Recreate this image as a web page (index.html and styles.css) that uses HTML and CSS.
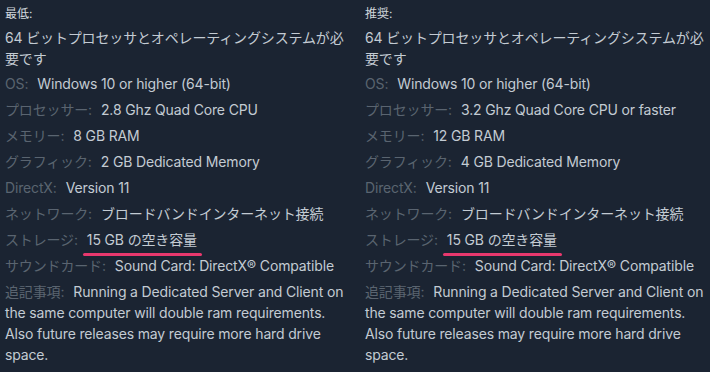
FILE: index.html
```html
<!DOCTYPE html>
<html lang="ja">
<head>
<meta charset="utf-8">
<link rel="stylesheet" href="styles.css">
</head>
<body>
<div class="sysreq">
  <div class="col">
    <div class="head">最低:</div>
    <ul class="list">
      <li>64 ビットプロセッサとオペレーティングシステムが必要です</li>
      <li><span class="lbl">OS:</span>Windows 10 or higher (64-bit)</li>
      <li><span class="lbl">プロセッサー:</span>2.8 Ghz Quad Core CPU</li>
      <li><span class="lbl">メモリー:</span>8 GB RAM</li>
      <li><span class="lbl">グラフィック:</span>2 GB Dedicated Memory</li>
      <li><span class="lbl">DirectX:</span>Version 11</li>
      <li><span class="lbl">ネットワーク:</span>ブロードバンドインターネット接続</li>
      <li><span class="lbl">ストレージ:</span><span class="mark">15 GB の空き容量</span></li>
      <li><span class="lbl">サウンドカード:</span>Sound Card: DirectX® Compatible</li>
      <li><span class="lbl">追記事項:</span>Running a Dedicated Server and Client on the same computer will double ram requirements. Also future releases may require more hard drive space.</li>
    </ul>
  </div>
  <div class="col">
    <div class="head">推奨:</div>
    <ul class="list">
      <li>64 ビットプロセッサとオペレーティングシステムが必要です</li>
      <li><span class="lbl">OS:</span>Windows 10 or higher (64-bit)</li>
      <li><span class="lbl">プロセッサー:</span>3.2 Ghz Quad Core CPU or faster</li>
      <li><span class="lbl">メモリー:</span>12 GB RAM</li>
      <li><span class="lbl">グラフィック:</span>4 GB Dedicated Memory</li>
      <li><span class="lbl">DirectX:</span>Version 11</li>
      <li><span class="lbl">ネットワーク:</span>ブロードバンドインターネット接続</li>
      <li><span class="lbl">ストレージ:</span><span class="mark">15 GB の空き容量</span></li>
      <li><span class="lbl">サウンドカード:</span>Sound Card: DirectX® Compatible</li>
      <li><span class="lbl">追記事項:</span>Running a Dedicated Server and Client on the same computer will double ram requirements. Also future releases may require more hard drive space.</li>
    </ul>
  </div>
</div>
</body>
</html>
```
FILE: styles.css
```css
html, body {
  margin: 0;
  padding: 0;
  background: #1b2432;
  width: 710px;
  height: 372px;
  overflow: hidden;
}
body {
  font-family: Inter, "Noto Sans CJK JP", sans-serif;
  font-size: 14px;
  letter-spacing: -0.15px;
  color: #c3cbd3;
}
.sysreq {
  display: grid;
  grid-template-columns: 344px 344px;
  column-gap: 16px;
  padding: 6px 0 0 5px;
}
.head {
  font-size: 12px;
  line-height: 16px;
  letter-spacing: 0;
  color: #d0d6dc;
  margin-bottom: 5px;
}
.list {
  list-style: none;
  margin: 0;
  padding: 0;
}
.list li {
  line-height: 21px;
  margin-bottom: 5px;
}
.list li:first-child {
  margin-bottom: 4px;
}
.lbl {
  color: #5a6470;
  margin-right: 9px;
}
.mark {
  position: relative;
  display: inline-block;
}
.mark::after {
  content: "";
  position: absolute;
  left: -4px;
  right: -5px;
  bottom: -6px;
  height: 3px;
  border-radius: 2px;
  background: #e8386d;
}
```
